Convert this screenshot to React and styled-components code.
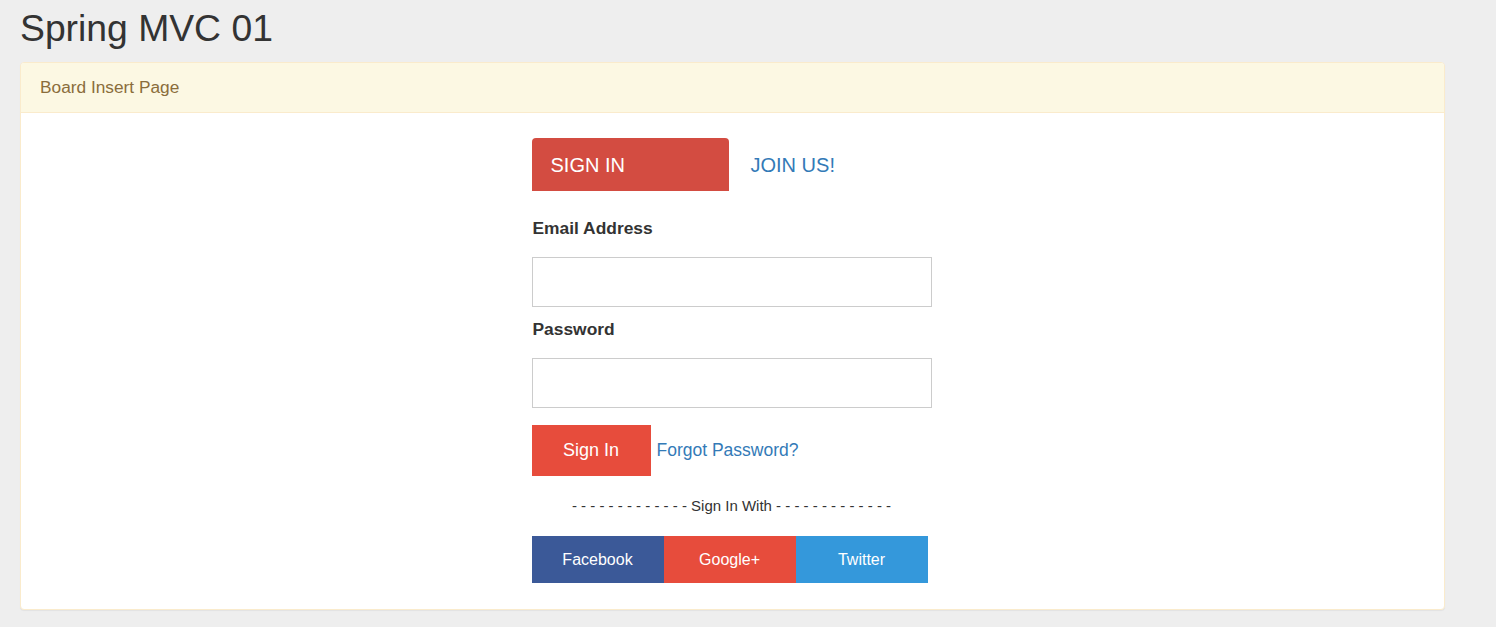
import React from "react";
import styled, { createGlobalStyle } from "styled-components";

const GlobalStyle = createGlobalStyle`
	html, body {
		margin: 0;
		padding: 0;
		background-color: #eeeeee;
		font-family: "Liberation Sans", Arial, sans-serif;
		color: #333333;
	}
	* {
		box-sizing: border-box;
	}
`;

const Page = styled.div`
	padding: 0 51px 18px 20px;
`;

const Title = styled.h1`
	margin: 4px 0 0;
	height: 58px;
	font-size: 37.3px;
	font-weight: 400;
	line-height: 48px;
	color: #333333;
`;

const Panel = styled.div`
	background-color: #ffffff;
	border: 1px solid #faebcc;
	border-radius: 4px;
	box-shadow: 0 1px 1px rgba(0, 0, 0, 0.05);
`;

const PanelHeading = styled.div`
	height: 50px;
	display: flex;
	align-items: center;
	padding: 0 19px;
	background-color: #fcf8e3;
	border-bottom: 1px solid #faebcc;
	border-top-left-radius: 3px;
	border-top-right-radius: 3px;
	color: #8a6d3b;
	font-size: 17.3px;
`;

const PanelBody = styled.div`
	display: flex;
	justify-content: center;
	padding: 25px 2px 26px 0;
`;

const Form = styled.form`
	width: 400px;
	display: flex;
	flex-direction: column;
`;

const Tabs = styled.div`
	display: flex;
	align-items: center;
	height: 53px;
	margin-bottom: 24px;
`;

const Tab = styled.a`
	display: flex;
	align-items: center;
	height: 53px;
	width: ${(p) => (p.$active ? "197px" : "auto")};
	padding: 2px 0 0 ${(p) => (p.$active ? "19px" : "22px")};
	background-color: ${(p) => (p.$active ? "#d34c41" : "transparent")};
	border-radius: 4px 4px 0 0;
	color: ${(p) => (p.$active ? "#ffffff" : "#337ab7")};
	font-size: 20px;
	text-transform: uppercase;
	text-decoration: none;
	cursor: pointer;
`;

const Label = styled.label`
	display: block;
	font-size: 17.4px;
	font-weight: 700;
	line-height: 24px;
	color: #333333;
	padding: 1px 0 0 1px;
	margin-bottom: 17px;
`;

const Input = styled.input`
	display: block;
	width: 400px;
	height: 50px;
	border: 1px solid #cccccc;
	padding: 0 12px;
	font-size: 16px;
	margin-bottom: 9px;
	outline: none;
`;

const ActionRow = styled.div`
	display: flex;
	align-items: center;
	margin-top: 8px;
`;

const SubmitButton = styled.button`
	width: 119px;
	height: 51px;
	border: none;
	background-color: #e74c3c;
	color: #ffffff;
	font-family: inherit;
	font-size: 18px;
	cursor: pointer;
`;

const Link = styled.a`
	margin-left: 6px;
	color: #337ab7;
	font-size: 17.5px;
	text-decoration: none;
`;

const Divider = styled.div`
	text-align: center;
	font-size: 15px;
	color: #333333;
	margin: 20px 0 20px;
	line-height: 20px;
`;

const SocialRow = styled.div`
	display: flex;
`;

const SocialButton = styled.a`
	display: flex;
	align-items: center;
	justify-content: center;
	width: 132px;
	height: 47px;
	background-color: ${(p) => p.$color};
	color: #ffffff;
	font-size: 16px;
	text-decoration: none;
	cursor: pointer;
`;

const socials = [
	{ name: "Facebook", color: "#3b5998" },
	{ name: "Google+", color: "#e74c3c" },
	{ name: "Twitter", color: "#3498db" },
];

const dashes = "- - - - - - - - - - - - -";

const App = () => {
	return (
		<Page>
			<GlobalStyle />
			<Title>Spring MVC 01</Title>
			<Panel>
				<PanelHeading>Board Insert Page</PanelHeading>
				<PanelBody>
					<Form onSubmit={(e) => e.preventDefault()}>
						<Tabs>
							<Tab $active>Sign In</Tab>
							<Tab>Join Us!</Tab>
						</Tabs>
						<Label htmlFor="email">Email Address</Label>
						<Input id="email" type="email" />
						<Label htmlFor="password">Password</Label>
						<Input id="password" type="password" />
						<ActionRow>
							<SubmitButton type="submit">Sign In</SubmitButton>
							<Link>Forgot Password?</Link>
						</ActionRow>
						<Divider>
							{dashes} Sign In With {dashes}
						</Divider>
						<SocialRow>
							{socials.map((s) => (
								<SocialButton key={s.name} $color={s.color}>
									{s.name}
								</SocialButton>
							))}
						</SocialRow>
					</Form>
				</PanelBody>
			</Panel>
		</Page>
	);
};

export default App;
